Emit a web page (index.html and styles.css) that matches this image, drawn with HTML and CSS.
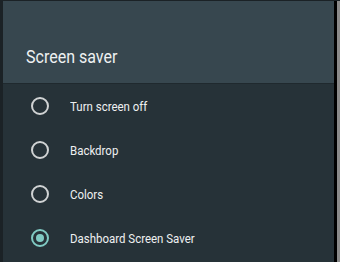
FILE: index.html
```html
<!DOCTYPE html>
<html>
<head>
<meta charset="utf-8">
<link rel="stylesheet" href="styles.css">
</head>
<body>
<div class="frame">
  <div class="panel">
    <div class="header"><h1 class="title">Screen saver</h1></div>
    <ul class="list">
      <li class="item"><span class="radio"></span><span class="label">Turn screen off</span></li>
      <li class="item"><span class="radio"></span><span class="label">Backdrop</span></li>
      <li class="item"><span class="radio"></span><span class="label">Colors</span></li>
      <li class="item"><span class="radio checked"></span><span class="label">Dashboard Screen Saver</span></li>
    </ul>
  </div>
  <div class="edge"></div>
</div>
</body>
</html>
```
FILE: styles.css
```css
html, body { margin: 0; padding: 0; }
body { width: 340px; height: 262px; overflow: hidden; background: #1b2226; font-family: Roboto, "Noto Sans", sans-serif; }
.frame { display: flex; height: 262px; padding-left: 3px; padding-top: 1px; box-sizing: border-box; }
.panel { width: 331px; display: flex; flex-direction: column; background: #263238; }
.edge { width: 3px; background: #000; border-right: 3px solid #8a8a8a; }
.header { height: 83px; flex: none; background: #37474f; border-bottom: 1px solid #1f292e; box-sizing: border-box; display: flex; align-items: flex-end; padding: 0 0 14px 23px; }
.title { margin: 0; font-weight: 400; font-size: 18px; color: #eef1f2; line-height: 24px; display: inline-block; transform: scaleX(0.89); transform-origin: left center; white-space: nowrap; }
.list { list-style: none; margin: 0; padding: 0; }
.item { height: 44px; display: flex; align-items: center; padding-left: 28px; }
.radio { width: 14px; height: 14px; border: 2px solid #d0d3d4; border-radius: 50%; box-sizing: content-box; margin-right: 21px; position: relative; flex: none; }
.radio.checked { border-color: #80cbc4; }
.radio.checked::after { content: ""; position: absolute; left: 3px; top: 3px; width: 8px; height: 8px; border-radius: 50%; background: #80cbc4; }
.label { font-size: 13.5px; color: #eef0f1; display: inline-block; transform: scaleX(0.85); transform-origin: left center; white-space: nowrap; }
```
